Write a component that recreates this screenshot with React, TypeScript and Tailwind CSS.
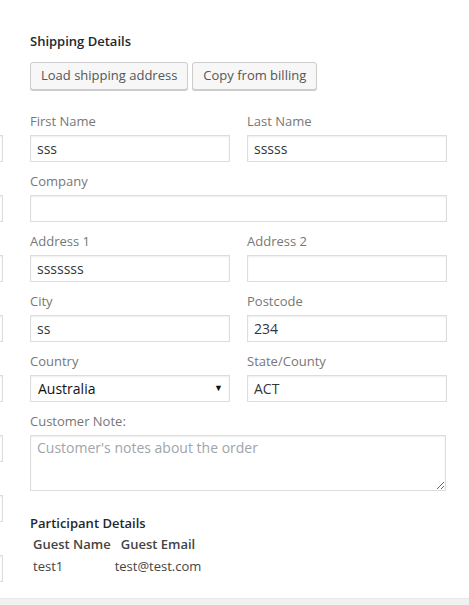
import React from 'react';

const inputCls =
  'block w-full h-[27px] border border-[#ddd] bg-white px-[6px] text-[14px] text-[#32373c] shadow-[inset_0_1px_2px_rgba(0,0,0,0.07)] outline-none';

function Field({ label, value = '' }: { label: string; value?: string }) {
  return (
    <div className="flex flex-col">
      <label className="h-[18px] text-[13px] leading-[18px] text-[#777]">{label}</label>
      <input readOnly value={value} className={`mt-[5px] ${inputCls}`} />
    </div>
  );
}

export default function App() {
  const slivers = [0, 1, 2, 3, 4, 5, 6, 7];

  return (
    <div className="min-h-screen bg-[#f1f1f1] font-['Open_Sans',sans-serif]">
      <div className="flex h-[598px] overflow-hidden bg-white shadow-[0_1px_1px_rgba(0,0,0,0.04)]">
        {/* previous column, mostly off screen */}
        <div className="ml-[-197px] flex w-[200px] shrink-0 flex-col gap-[33px] pt-[135px]">
          {slivers.map((i) => (
            <div
              key={i}
              className="h-[27px] w-full border border-[#ddd] bg-white shadow-[inset_0_1px_2px_rgba(0,0,0,0.07)]"
            />
          ))}
        </div>

        <div className="ml-[27px] w-[417px] shrink-0 pt-[32px]">
          <h3 className="text-[13px] font-semibold leading-[18px] text-[#23282d]">Shipping Details</h3>

          <div className="mt-[12px] flex gap-[4px]">
            <button className="h-[28px] rounded-[3px] border border-[#ccc] bg-[#f7f7f7] px-[10px] text-[13px] text-[#555] shadow-[0_1px_0_#ccc]">
              Load shipping address
            </button>
            <button className="h-[28px] rounded-[3px] border border-[#ccc] bg-[#f7f7f7] px-[10px] text-[13px] text-[#555] shadow-[0_1px_0_#ccc]">
              Copy from billing
            </button>
          </div>

          <div className="mt-[22px] grid grid-cols-[200px_200px] gap-x-[17px] gap-y-[10px]">
            <Field label="First Name" value="sss" />
            <Field label="Last Name" value="sssss" />
            <div className="col-span-2">
              <Field label="Company" />
            </div>
            <Field label="Address 1" value="sssssss" />
            <Field label="Address 2" />
            <Field label="City" value="ss" />
            <Field label="Postcode" value="234" />

            <div className="flex flex-col">
              <label className="h-[18px] text-[13px] leading-[18px] text-[#777]">Country</label>
              <div className="relative mt-[5px]">
                <select
                  defaultValue="AU"
                  className="block h-[27px] w-full appearance-none border border-[#ddd] bg-white pl-[7px] text-[14px] text-[#111] outline-none shadow-[inset_0_1px_2px_rgba(0,0,0,0.07)]"
                >
                  <option value="AU">Australia</option>
                </select>
                <span className="pointer-events-none absolute right-[7px] top-[6px] text-[9px] text-[#111]">▼</span>
              </div>
            </div>
            <Field label="State/County" value="ACT" />

            <div className="col-span-2 flex flex-col">
              <label className="h-[18px] text-[13px] leading-[18px] text-[#777]">Customer Note:</label>
              <textarea
                readOnly
                placeholder="Customer's notes about the order"
                className="mt-[5px] block h-[56px] w-[416px] border border-[#ddd] bg-white px-[6px] py-[2px] text-[14px] leading-[20px] text-[#32373c] outline-none shadow-[inset_0_1px_2px_rgba(0,0,0,0.07)] placeholder:text-[#a0a5aa]"
              />
            </div>
          </div>

          <h3 className="mt-[23px] text-[13px] font-semibold leading-[18px] text-[#23282d]">Participant Details</h3>
          <table className="border-separate border-spacing-[2px] text-[13px] leading-[18px] text-[#444]">
            <thead>
              <tr>
                <th className="p-px text-center font-semibold">Guest Name</th>
                <th className="p-px text-center font-semibold">Guest Email</th>
              </tr>
            </thead>
            <tbody>
              <tr>
                <td className="p-px text-left">test1</td>
                <td className="p-px text-left">test@test.com</td>
              </tr>
            </tbody>
          </table>
        </div>
      </div>
    </div>
  );
}
